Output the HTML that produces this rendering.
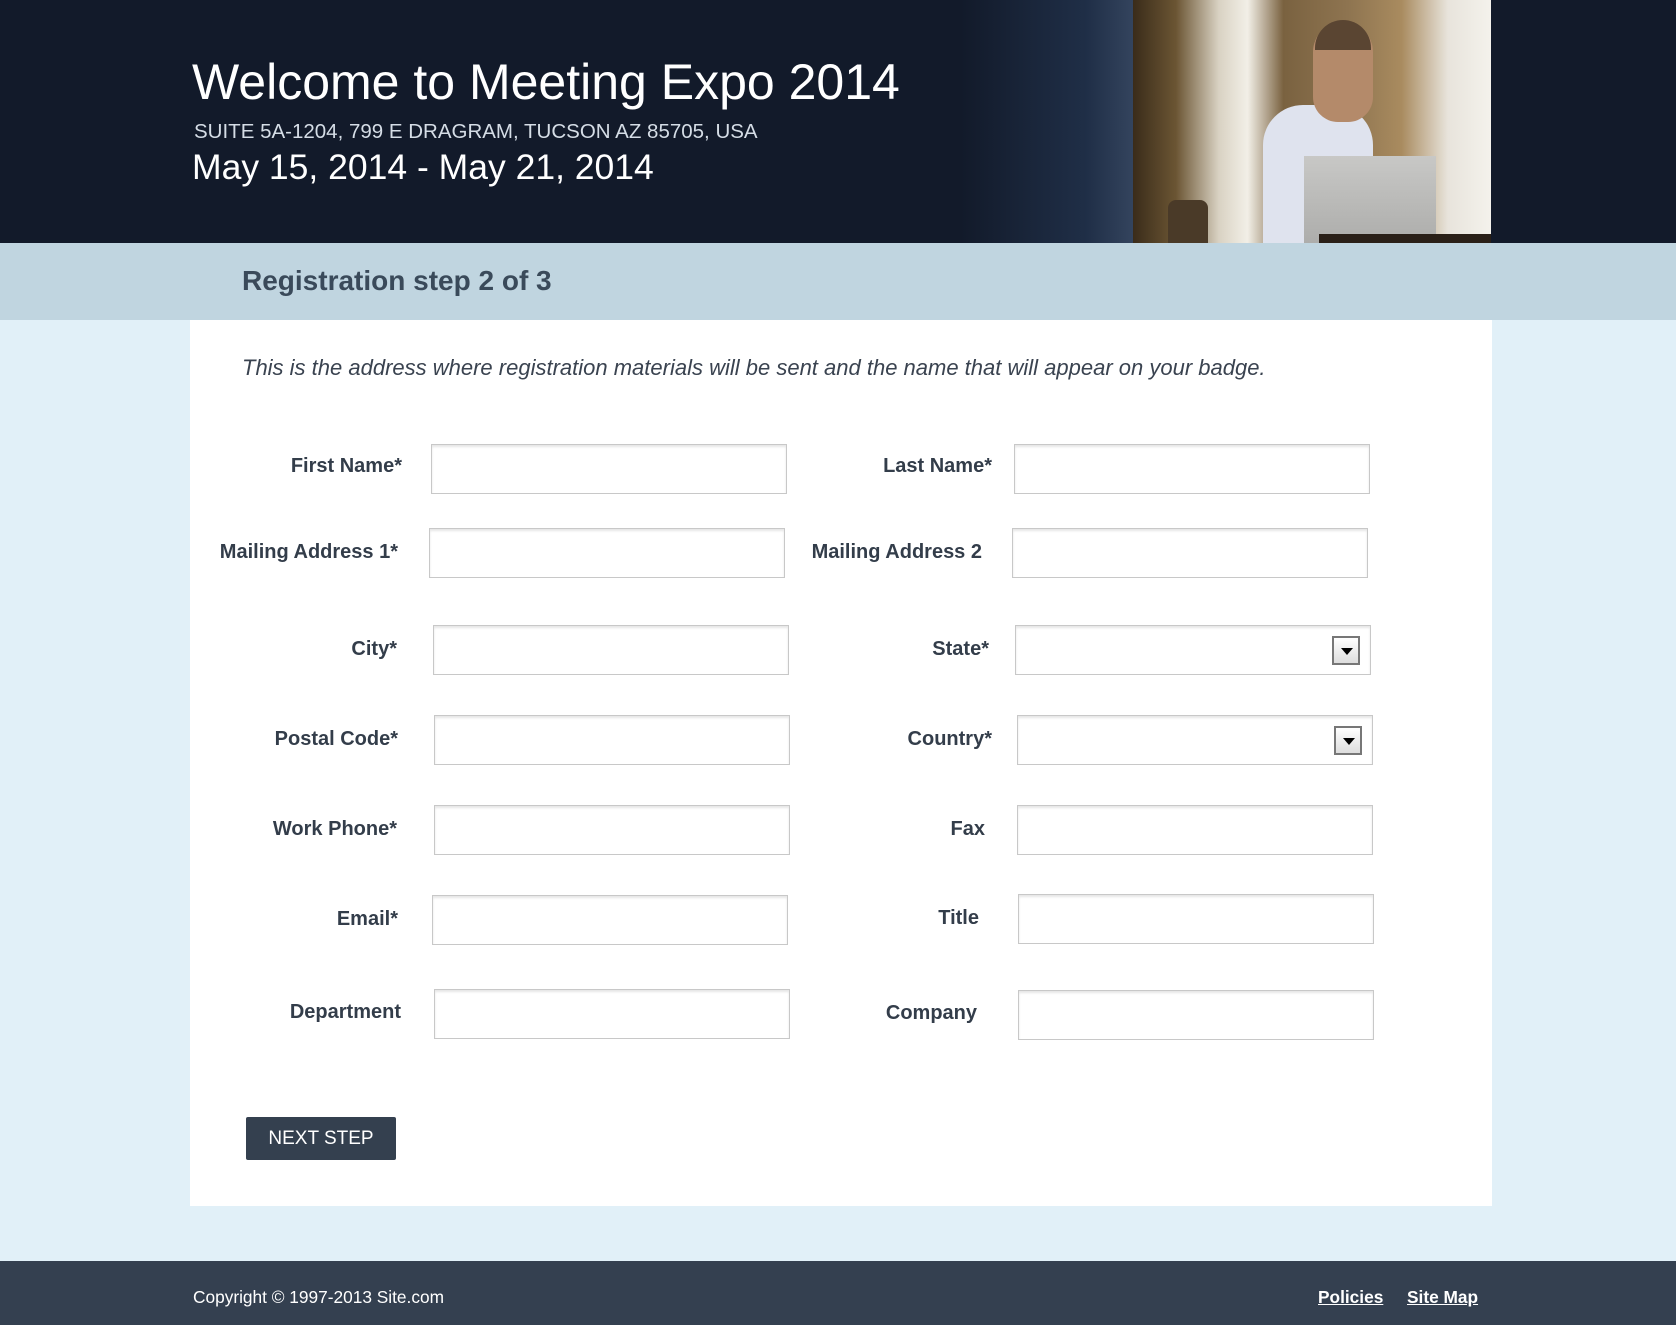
<!DOCTYPE html>
<html><head><meta charset="utf-8"><style>
*{margin:0;padding:0;box-sizing:border-box}
body{width:1676px;height:1325px;background:#e1f0f8;font-family:"Liberation Sans",Arial,sans-serif;position:relative;overflow:hidden}
.hdr{position:absolute;left:0;top:0;width:1676px;height:243px;background:#121a2a;overflow:hidden}
.glow{position:absolute;left:960px;top:0;width:180px;height:243px;background:linear-gradient(90deg,rgba(30,45,70,0) 0%,rgba(40,60,90,.6) 70%,rgba(70,90,120,.7) 100%)}
.photo{position:absolute;left:1133px;top:0;width:358px;height:243px;overflow:hidden;background:linear-gradient(90deg,#3a2c1a 0%,#6b5533 12%,#d9d2c3 24%,#f2efe7 32%,#7a6240 42%,#8e7450 60%,#a98b5f 75%,#e8e4dc 88%,#f4f2ec 100%)}
.photo div{position:absolute}
.h1{position:absolute;left:192px;top:53px;font-size:50px;color:#fff}
.addr{position:absolute;left:194px;top:120px;font-size:20.5px;color:#d5dde6}
.date{position:absolute;left:192px;top:147px;font-size:35.5px;color:#fff}
.step{position:absolute;left:0;top:243px;width:1676px;height:77px;background:#c0d5e0}
.step span{position:absolute;left:242px;top:22px;font-size:28px;font-weight:bold;color:#3a4a5a}
.panel{position:absolute;left:190px;top:320px;width:1302px;height:886px;background:#fff}
.intro{position:absolute;left:242px;top:355px;font-size:22px;font-style:italic;color:#3a4350}
.lbl{position:absolute;font-size:20px;font-weight:bold;color:#333d4a;text-align:right;width:300px}
.in{position:absolute;width:356px;height:50px;border:1px solid #c8c8c8;box-shadow:inset 0 2px 2px #e6e6e6;background:#fff}
.dd{position:absolute;right:10px;top:10px;width:28px;height:29px;border:2px solid #777;background:linear-gradient(#fff,#ddd)}
.dd:after{content:"";position:absolute;left:7px;top:10px;border-left:6px solid transparent;border-right:6px solid transparent;border-top:7px solid #000}
.btn{position:absolute;left:246px;top:1117px;width:150px;height:43px;background:#34404f;color:#fff;font-size:19px;text-align:center;line-height:43px;border-radius:2px}
.ftr{position:absolute;left:0;top:1261px;width:1676px;height:64px;background:#344050;color:#fff;font-size:17.3px}
.ftr .c{position:absolute;left:193px;top:26px}
.ftr a{position:absolute;top:26px;color:#fff;font-weight:bold;text-decoration:underline}
</style></head><body>
<div class="hdr"><div class="glow"></div><div class="photo">
<div style="left:130px;top:105px;width:110px;height:150px;background:#dfe3ee;border-radius:40px 40px 0 0"></div>
<div style="left:180px;top:22px;width:60px;height:100px;background:#b48a6a;border-radius:30px 30px 25px 25px"></div>
<div style="left:182px;top:20px;width:56px;height:30px;background:#5a4532;border-radius:28px 28px 0 0"></div>
<div style="left:95px;top:248px;width:0;height:0"></div>
<div style="left:171px;top:156px;width:132px;height:100px;background:linear-gradient(#c8c8c6,#a9a9a7)"></div>
<div style="left:186px;top:234px;width:172px;height:20px;background:#2a2018"></div>
<div style="left:35px;top:200px;width:40px;height:50px;background:#4a3a28;border-radius:8px"></div>
</div>
<div class="h1">Welcome to Meeting Expo 2014</div>
<div class="addr">SUITE 5A-1204, 799 E DRAGRAM, TUCSON AZ 85705, USA</div>
<div class="date">May 15, 2014 - May 21, 2014</div></div>
<div class="step"><span>Registration step 2 of 3</span></div>
<div class="panel"></div>
<div class="intro">This is the address where registration materials will be sent and the name that will appear on your badge.</div>

<div class="lbl" style="left:102px;top:455px">First Name*</div><div class="in" style="left:431px;top:444px"></div>
<div class="lbl" style="left:692px;top:455px">Last Name*</div><div class="in" style="left:1014px;top:444px"></div>
<div class="lbl" style="left:98px;top:541px">Mailing Address 1*</div><div class="in" style="left:429px;top:528px"></div>
<div class="lbl" style="left:682px;top:541px">Mailing Address 2</div><div class="in" style="left:1012px;top:528px"></div>
<div class="lbl" style="left:97px;top:638px">City*</div><div class="in" style="left:433px;top:625px"></div>
<div class="lbl" style="left:689px;top:638px">State*</div><div class="in" style="left:1015px;top:625px"><div class="dd"></div></div>
<div class="lbl" style="left:98px;top:728px">Postal Code*</div><div class="in" style="left:434px;top:715px"></div>
<div class="lbl" style="left:692px;top:728px">Country*</div><div class="in" style="left:1017px;top:715px"><div class="dd"></div></div>
<div class="lbl" style="left:97px;top:818px">Work Phone*</div><div class="in" style="left:434px;top:805px"></div>
<div class="lbl" style="left:685px;top:818px">Fax</div><div class="in" style="left:1017px;top:805px"></div>
<div class="lbl" style="left:98px;top:908px">Email*</div><div class="in" style="left:432px;top:895px"></div>
<div class="lbl" style="left:679px;top:907px">Title</div><div class="in" style="left:1018px;top:894px"></div>
<div class="lbl" style="left:101px;top:1001px">Department</div><div class="in" style="left:434px;top:989px"></div>
<div class="lbl" style="left:677px;top:1002px">Company</div><div class="in" style="left:1018px;top:990px"></div>

<div class="btn">NEXT STEP</div>
<div class="ftr"><span class="c">Copyright © 1997-2013 Site.com</span>
<a style="left:1318px">Policies</a><a style="left:1407px">Site Map</a></div>
</body></html>
